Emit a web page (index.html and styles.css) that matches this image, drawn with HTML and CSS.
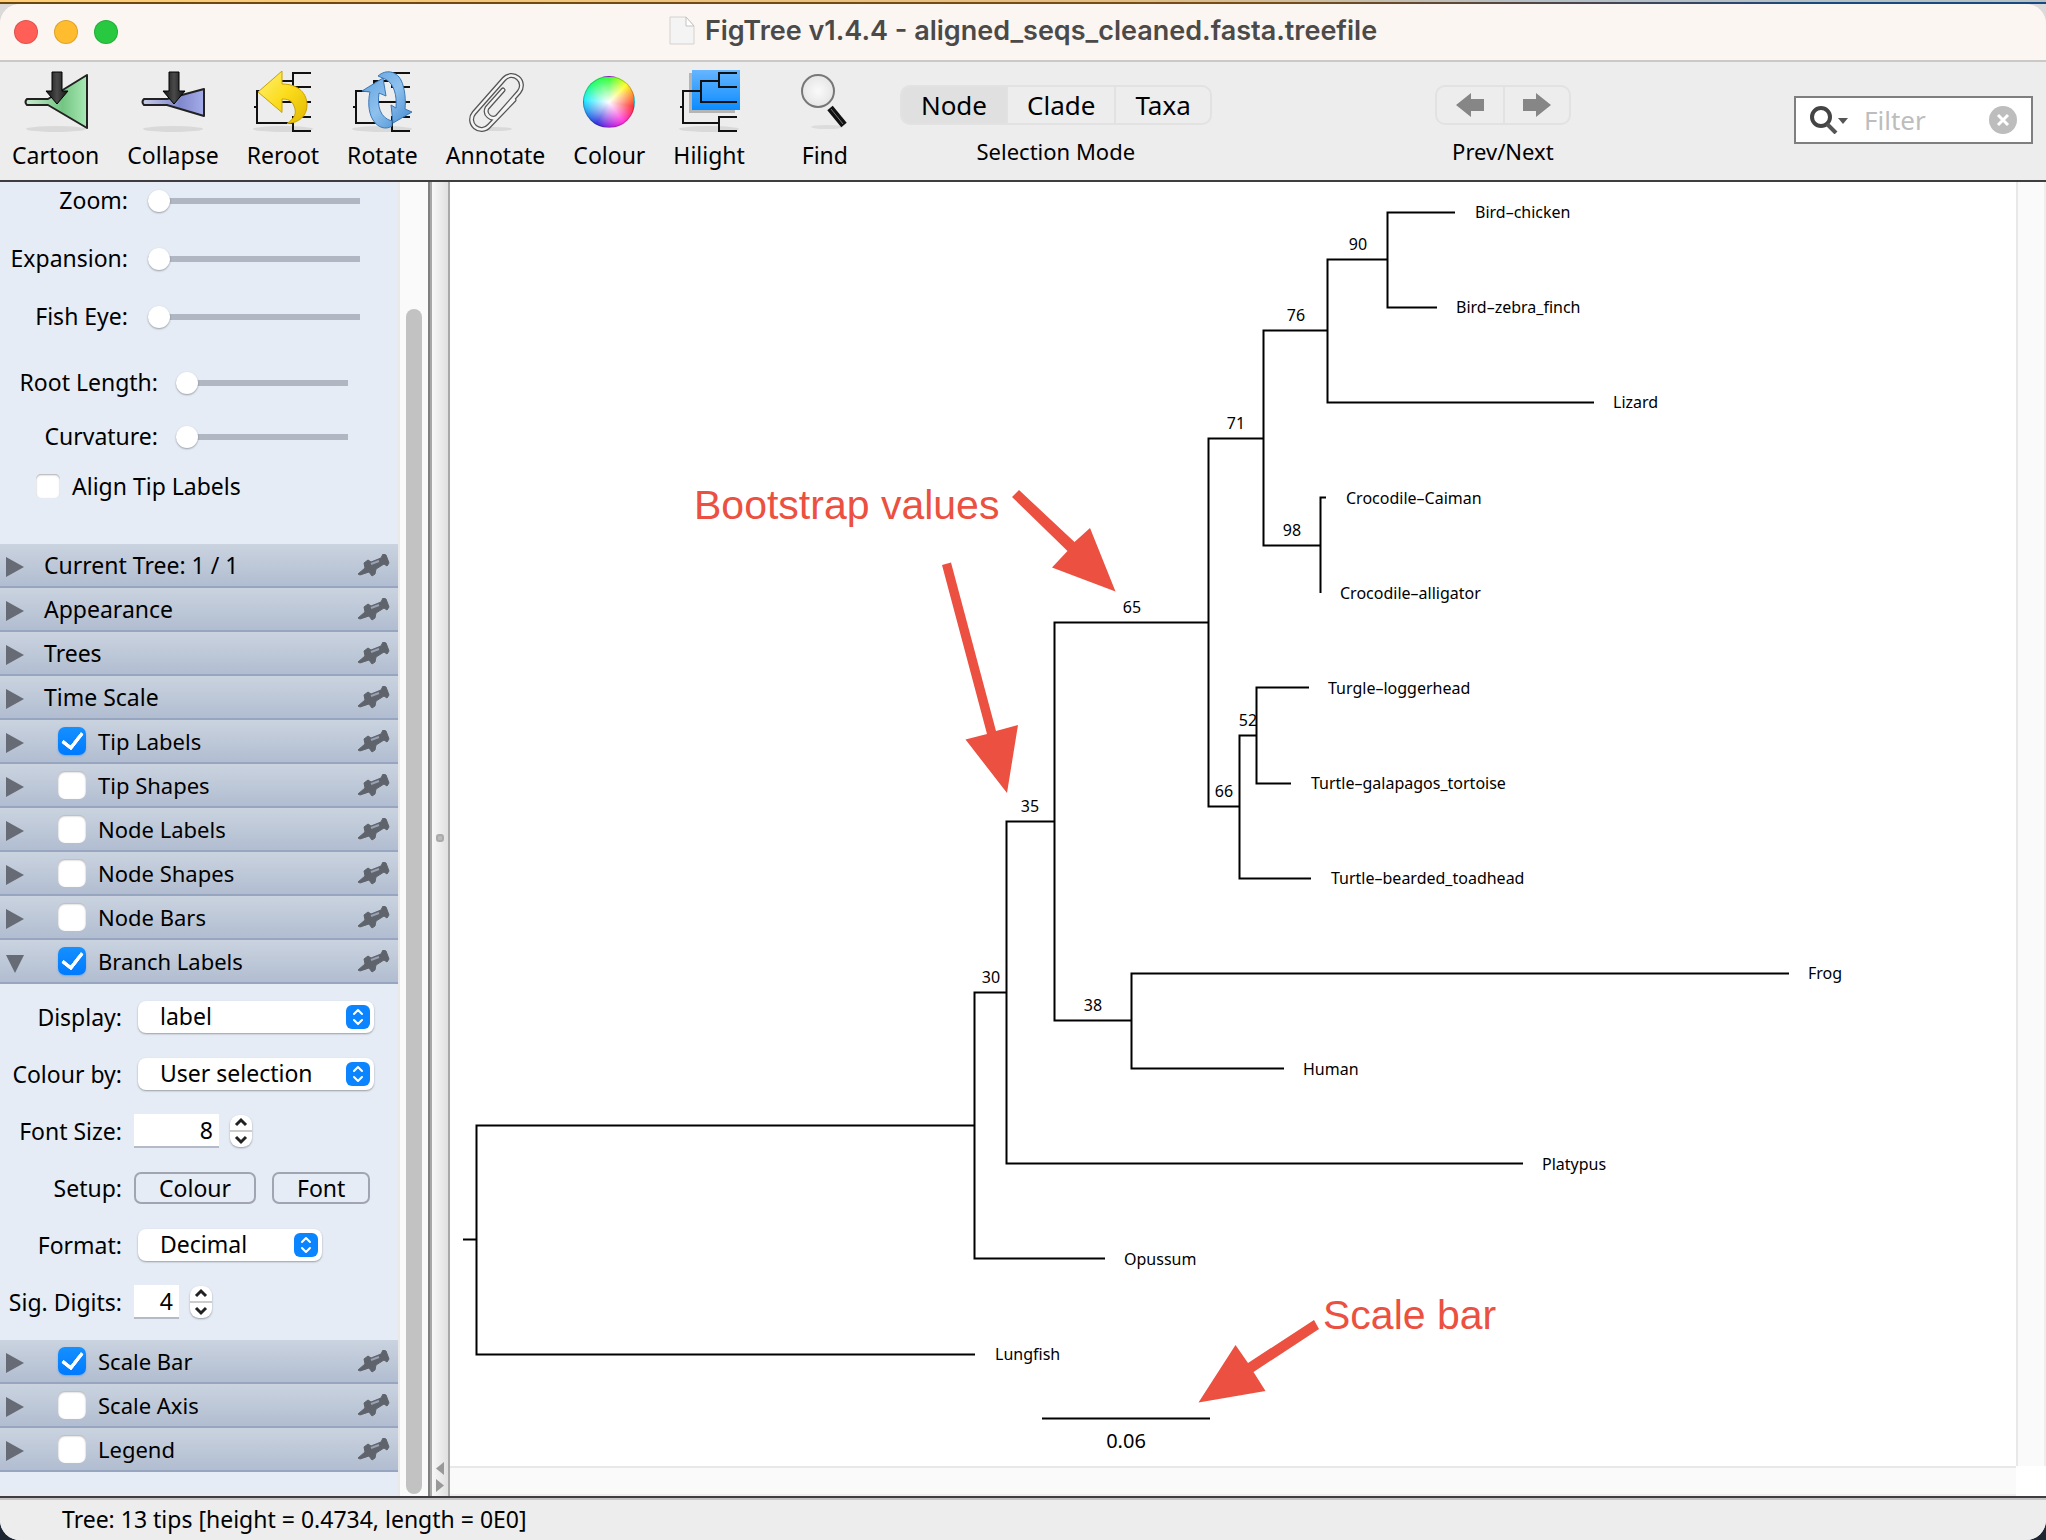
FILE: index.html
```html
<!DOCTYPE html>
<html lang="en">
<head>
<meta charset="utf-8">
<title>FigTree v1.4.4 - aligned_seqs_cleaned.fasta.treefile</title>
<link rel="stylesheet" href="styles.css">
</head>
<body>
<svg class="defs" aria-hidden="true">
  <defs>
    <linearGradient id="green" x1="0" x2="1"><stop offset="0" stop-color="#c9ecd0"/><stop offset=".6" stop-color="#73c583"/><stop offset="1" stop-color="#a9e8b4"/></linearGradient>
    <linearGradient id="violet" x1="0" x2="1"><stop offset="0" stop-color="#c9cdea"/><stop offset=".6" stop-color="#7f88cc"/><stop offset="1" stop-color="#a5acea"/></linearGradient>
    <linearGradient id="gold" x1="0" y1="0" x2="1" y2="1"><stop offset="0" stop-color="#fff27a"/><stop offset=".5" stop-color="#fbdc1c"/><stop offset="1" stop-color="#e2b800"/></linearGradient>
    <linearGradient id="azure" x1="0" y1="0" x2="1" y2="1"><stop offset="0" stop-color="#5d9fdc"/><stop offset=".5" stop-color="#8fc1ee"/><stop offset="1" stop-color="#3d86cc"/></linearGradient>
    <linearGradient id="sky" x1="0" y1="0" x2="0" y2="1"><stop offset="0" stop-color="#66b5ff"/><stop offset="1" stop-color="#0a8cff"/></linearGradient>
    <linearGradient id="ink" x1="0" x2="1"><stop offset="0" stop-color="#111"/><stop offset=".5" stop-color="#4a4a4a"/><stop offset="1" stop-color="#111"/></linearGradient>
    <radialGradient id="lens"><stop offset="0" stop-color="#fafafa"/><stop offset="1" stop-color="#e6e6e6"/></radialGradient>
    <g id="shade"><ellipse cx="32" cy="61" rx="30" ry="3" fill="#d9d9d9"/></g>
    <g id="down-arrow"><path d="M28 4h10v19h6L33 36 22 23h6z" fill="url(#ink)" stroke="#000"/></g>
    <g id="mini-tree" fill="none" stroke="#111" stroke-width="2"><path d="M3 39H6M42 55H6V23H24M42 13H24V34H60M60 5H42V19H60M60 49H42V63H60"/></g>
    <g id="pin"><path d="M0 20 7 14 6 9 10 6 13 8 23 4 25 0 28 1 31 9 29 12 26 10 18 15 17 20 14 22 11 18 2 21Z" fill="#5f636b" stroke="#5f636b" stroke-linejoin="round"/><path d="M13 10 21 7" stroke="#98a2b3" stroke-width="2"/></g>
    <g id="updown" fill="none" stroke="#fff" stroke-width="2" stroke-linecap="round" stroke-linejoin="round"><rect width="24" height="24" rx="6" fill="#0a84ff" stroke="none"/><path d="M8 9 12 5 16 9M8 15 12 19 16 15"/></g>
  </defs>
</svg>

<div class="window">
  <header class="titlebar">
    <div class="lights">
      <button class="light red" aria-label="Close"></button>
      <button class="light amber" aria-label="Minimise"></button>
      <button class="light green" aria-label="Zoom window"></button>
    </div>
    <h1 class="title">
      <svg class="doc" viewBox="0 0 26 30" aria-hidden="true"><path d="M1 1H17L25 10V28H1Z" fill="#f4f4f4" stroke="#d4d2d0"/><path d="M17 1V10H25Z" fill="#fff" stroke="#c4c2c0"/></svg>
      FigTree v1.4.4 - aligned_seqs_cleaned.fasta.treefile
    </h1>
  </header>

  <div class="toolbar">
    <div class="tools">
      <button class="tool"><svg class="icon" viewBox="0 0 64 64"><use href="#shade"/><path d="M24 31H3Q0 34 3 37H24L63 60V7Z" fill="url(#green)" stroke="#222" stroke-width="2" stroke-linejoin="round"/><use href="#down-arrow"/></svg>Cartoon</button>
      <button class="tool"><svg class="icon" viewBox="0 0 64 64"><use href="#shade"/><path d="M26 31H3Q0 34 3 37H26L63 48V21Z" fill="url(#violet)" stroke="#222" stroke-width="2" stroke-linejoin="round"/><use href="#down-arrow"/></svg>Collapse</button>
      <button class="tool"><svg class="icon" viewBox="0 0 64 64"><use href="#shade"/><use href="#mini-tree"/><path d="M7 24 31 3V16C48 16 56 26 56 37 56 48 48 55 36 55.500C44 50 46 45 43 38 41 32 36 31 31 31V44.500Z" fill="url(#gold)" stroke="#c9a200"/></svg>Reroot</button>
      <button class="tool"><svg class="icon" viewBox="0 0 64 64"><use href="#shade"/><use href="#mini-tree"/><path d="M12 23 33 10 36 28 29 25C27 38 30 50 42 53V58C36 62 28 60 23 52 18 44 18 32 20 24ZM62 44 43 55 41 37 46 40C47 27 44 17 37 12L28 8C36 1 46 3 51 12 55 20 56 33 55 41Z" fill="url(#azure)" stroke="#3a78b8"/></svg>Rotate</button>
      <button class="tool"><svg class="icon" viewBox="0 0 64 64" fill="none" stroke-linecap="round"><ellipse cx="30" cy="61" rx="18" ry="2" fill="#d9d9d9"/><path d="M39 22 23 40A7 7 0 0 0 33 49L55 24A9.500 9.500 0 0 0 40 11L10 45A9.500 9.500 0 0 0 25 58L50 32" stroke="#555" stroke-width="5"/><path d="M39 22 23 40A7 7 0 0 0 33 49L55 24A9.500 9.500 0 0 0 40 11L10 45A9.500 9.500 0 0 0 25 58L50 32" stroke="#f4f4f4" stroke-width="2.500"/></svg>Annotate</button>
      <button class="tool"><span class="icon"><span class="wheel"></span></span>Colour</button>
      <button class="tool"><svg class="icon" viewBox="0 0 64 64"><use href="#shade"/><path d="M12 5H58V45H12Z" fill="#b5b5b5"/><path d="M15 2H63V42H15Z" fill="url(#sky)"/><use href="#mini-tree"/></svg>Hilight</button>
      <button class="tool find"><svg class="icon" viewBox="0 0 64 64"><ellipse cx="34" cy="59" rx="16" ry="2" fill="#dcdcdc"/><circle cx="25" cy="23" r="16" fill="url(#lens)" stroke="#777" stroke-width="2"/><path d="M37 40 51 57" stroke="#111" stroke-width="7"/><path d="M38 41 50 56" stroke="#777" stroke-width="1"/></svg>Find</button>
    </div>
    <div class="group">
      <div class="segments" role="group" aria-labelledby="mode">
        <button class="segment on" aria-pressed="true">Node</button><button class="segment" aria-pressed="false">Clade</button><button class="segment" aria-pressed="false">Taxa</button>
      </div>
      <span id="mode">Selection Mode</span>
    </div>
    <div class="group nav">
      <div class="segments" role="group" aria-labelledby="nav">
        <button class="segment step" aria-label="Previous"><svg viewBox="0 0 28 24"><path d="M0 12 15 0V6H28V18H15V24Z" fill="#868686"/></svg></button><button class="segment step" aria-label="Next"><svg viewBox="0 0 28 24"><path d="M28 12 13 0V6H0V18H13V24Z" fill="#868686"/></svg></button>
      </div>
      <span id="nav">Prev/Next</span>
    </div>
    <div class="search">
      <svg class="lookup" viewBox="0 0 40 28" fill="none" aria-hidden="true"><circle cx="11" cy="11" r="9" stroke="#444" stroke-width="4"/><path d="M17 18 26 27" stroke="#555" stroke-width="4"/><path d="M28 12H38L33 18Z" fill="#555"/></svg>
      <input class="filter" type="text" placeholder="Filter" aria-label="Filter">
      <button class="clear" aria-label="Clear filter"><svg viewBox="0 0 28 28"><circle cx="14" cy="14" r="14" fill="#bdbdbd"/><path d="M9 9 19 19M19 9 9 19" stroke="#fff" stroke-width="3"/></svg></button>
    </div>
  </div>

  <div class="content">
    <aside class="sidebar">
      <div class="layout-panel">
        <div class="sliders">
          <div class="slide"><label for="zoom">Zoom:</label><input id="zoom" type="range" value="0"></div>
          <div class="slide"><label for="expansion">Expansion:</label><input id="expansion" type="range" value="0"></div>
          <div class="slide"><label for="fisheye">Fish Eye:</label><input id="fisheye" type="range" value="0"></div>
        </div>
        <div class="sliders inner">
          <div class="slide"><label for="rootlen">Root Length:</label><input id="rootlen" type="range" value="0"></div>
          <div class="slide"><label for="curve">Curvature:</label><input id="curve" type="range" value="0"></div>
        </div>
        <label class="align"><input class="tick small" type="checkbox"><span>Align Tip Labels</span></label>
      </div>

      <div class="section"><button class="toggle" aria-label="Expand Current Tree"></button><span class="heading">Current Tree: 1 / 1</span><svg class="pin" viewBox="0 0 32 23"><use href="#pin"/></svg></div>
      <div class="section"><button class="toggle" aria-label="Expand Appearance"></button><span class="heading">Appearance</span><svg class="pin" viewBox="0 0 32 23"><use href="#pin"/></svg></div>
      <div class="section"><button class="toggle" aria-label="Expand Trees"></button><span class="heading">Trees</span><svg class="pin" viewBox="0 0 32 23"><use href="#pin"/></svg></div>
      <div class="section"><button class="toggle" aria-label="Expand Time Scale"></button><span class="heading">Time Scale</span><svg class="pin" viewBox="0 0 32 23"><use href="#pin"/></svg></div>
      <div class="section"><button class="toggle" aria-label="Expand Tip Labels"></button><label class="check"><input class="tick" type="checkbox" checked>Tip Labels</label><svg class="pin" viewBox="0 0 32 23"><use href="#pin"/></svg></div>
      <div class="section"><button class="toggle" aria-label="Expand Tip Shapes"></button><label class="check"><input class="tick" type="checkbox">Tip Shapes</label><svg class="pin" viewBox="0 0 32 23"><use href="#pin"/></svg></div>
      <div class="section"><button class="toggle" aria-label="Expand Node Labels"></button><label class="check"><input class="tick" type="checkbox">Node Labels</label><svg class="pin" viewBox="0 0 32 23"><use href="#pin"/></svg></div>
      <div class="section"><button class="toggle" aria-label="Expand Node Shapes"></button><label class="check"><input class="tick" type="checkbox">Node Shapes</label><svg class="pin" viewBox="0 0 32 23"><use href="#pin"/></svg></div>
      <div class="section"><button class="toggle" aria-label="Expand Node Bars"></button><label class="check"><input class="tick" type="checkbox">Node Bars</label><svg class="pin" viewBox="0 0 32 23"><use href="#pin"/></svg></div>
      <div class="section"><button class="toggle open" aria-label="Collapse Branch Labels"></button><label class="check"><input class="tick" type="checkbox" checked>Branch Labels</label><svg class="pin" viewBox="0 0 32 23"><use href="#pin"/></svg></div>

      <div class="options">
        <label for="display">Display:</label>
        <div class="picker"><select id="display"><option>label</option></select><svg viewBox="0 0 24 24"><use href="#updown"/></svg></div>
        <label for="colourby">Colour by:</label>
        <div class="picker"><select id="colourby"><option>User selection</option></select><svg viewBox="0 0 24 24"><use href="#updown"/></svg></div>
        <label for="fontsize">Font Size:</label>
        <div class="field"><input class="number" id="fontsize" type="text" value="8"><button class="stepper" aria-label="Change font size"><svg viewBox="0 0 22 32"><path d="M0 16H22" stroke="#ccc" stroke-width="2"/><path d="M6 10 11 5 16 10M6 22 11 27 16 22" fill="none" stroke="#222" stroke-width="3"/></svg></button></div>
        <span class="caption">Setup:</span>
        <div class="field"><button class="push">Colour</button><button class="push">Font</button></div>
        <label for="format">Format:</label>
        <div class="picker short"><select id="format"><option>Decimal</option></select><svg viewBox="0 0 24 24"><use href="#updown"/></svg></div>
        <label for="digits">Sig. Digits:</label>
        <div class="field"><input class="number narrow" id="digits" type="text" value="4"><button class="stepper" aria-label="Change significant digits"><svg viewBox="0 0 22 32"><path d="M0 16H22" stroke="#ccc" stroke-width="2"/><path d="M6 10 11 5 16 10M6 22 11 27 16 22" fill="none" stroke="#222" stroke-width="3"/></svg></button></div>
      </div>

      <div class="section"><button class="toggle" aria-label="Expand Scale Bar"></button><label class="check"><input class="tick" type="checkbox" checked>Scale Bar</label><svg class="pin" viewBox="0 0 32 23"><use href="#pin"/></svg></div>
      <div class="section"><button class="toggle" aria-label="Expand Scale Axis"></button><label class="check"><input class="tick" type="checkbox">Scale Axis</label><svg class="pin" viewBox="0 0 32 23"><use href="#pin"/></svg></div>
      <div class="section"><button class="toggle" aria-label="Expand Legend"></button><label class="check"><input class="tick" type="checkbox">Legend</label><svg class="pin" viewBox="0 0 32 23"><use href="#pin"/></svg></div>
    </aside>

    <div class="scroll"><div class="thumb"></div></div>

    <div class="divider">
      <span class="grip"></span>
      <svg class="arrows" viewBox="0 0 8 30"><path d="M8 0V13L0 6.500ZM0 17V30L8 23.500Z" fill="#999"/></svg>
    </div>

    <main class="viewer">
      <svg class="tree" viewBox="450 182 1566 1284" role="img" aria-label="Phylogenetic tree">
        <g class="branches">
          <path d="M463 1239.500H476.500M975 1125.500H476.500V1354.500H975"/>
          <path d="M1006.500 992.500H974.500V1258.500H1105"/>
          <path d="M1054.500 821.500H1006.500V1163.500H1523"/>
          <path d="M1208.500 622.500H1054.500V1020.500H1131.500"/>
          <path d="M1789 973.500H1131.500V1068.500H1284"/>
          <path d="M1263.500 438.500H1208.500V806.500H1239.500"/>
          <path d="M1327.500 330.500H1263.500V545.500H1320.500"/>
          <path d="M1387.500 259.500H1327.500V402.500H1594"/>
          <path d="M1455 212.500H1387.500V307.500H1437"/>
          <path d="M1326 497.500H1320.500V593"/>
          <path d="M1256.500 735.500H1239.500V878.500H1311"/>
          <path d="M1309 687.500H1256.500V783.500H1291"/>
          <path d="M1042 1418.500H1210"/>
        </g>
        <g class="tips">
          <text x="1475" y="218">Bird–chicken</text>
          <text x="1456" y="313">Bird–zebra_finch</text>
          <text x="1613" y="408">Lizard</text>
          <text x="1346" y="504">Crocodile–Caiman</text>
          <text x="1340" y="599">Crocodile–alligator</text>
          <text x="1328" y="694">Turgle–loggerhead</text>
          <text x="1311" y="789">Turtle–galapagos_tortoise</text>
          <text x="1331" y="884">Turtle–bearded_toadhead</text>
          <text x="1808" y="979">Frog</text>
          <text x="1303" y="1075">Human</text>
          <text x="1542" y="1170">Platypus</text>
          <text x="1124" y="1265">Opussum</text>
          <text x="995" y="1360">Lungfish</text>
        </g>
        <g class="values">
          <text x="1358" y="250">90</text>
          <text x="1296" y="321">76</text>
          <text x="1236" y="429">71</text>
          <text x="1292" y="536">98</text>
          <text x="1132" y="613">65</text>
          <text x="1248" y="726">52</text>
          <text x="1224" y="797">66</text>
          <text x="1030" y="812">35</text>
          <text x="991" y="983">30</text>
          <text x="1093" y="1011">38</text>
          <text class="scale" x="1126" y="1448">0.06</text>
        </g>
        <g class="notes">
          <text x="694" y="519">Bootstrap values</text>
          <text x="1323" y="1329">Scale bar</text>
          <path d="M1019 490 1074.500 542 1090 528 1115.500 591.500 1052 567.500 1067.500 551 1012 497Z"/>
          <path d="M951 562.500 996 731 1018 725 1007 793 965.500 739.500 987 734 942 565Z"/>
          <path d="M1314 1320 1248 1363 1235.500 1345 1198.500 1402.500 1265.500 1391 1253.500 1372 1319 1329Z"/>
        </g>
      </svg>
      <div class="vscroll"></div>
      <div class="hscroll"></div>
    </main>
  </div>

  <footer class="status">Tree: 13 tips [height = 0.4734, length = 0E0]</footer>
</div>
</body>
</html>
```
FILE: styles.css
```css
* { box-sizing: border-box; }

body {
  margin: 0;
  min-height: 100vh;
  display: flex;
  flex-direction: column;
  padding-top: 4px;
  font: 23px/30px "Noto Sans", sans-serif;
  color: #000;
  background:
    linear-gradient(90deg, #ffcf78, #e0bd85 55%, #b4bfc6 75%, #b9bfc2) 0 0 / 100% 2px no-repeat,
    linear-gradient(90deg, #6b4710, #7a4d16 62%, #4a4450 78%, #154b82 90%) 0 2px / 100% 2px no-repeat,
    linear-gradient(#dcdad8, #dcdad8) 0 4px / 100% 40px no-repeat,
    #1e2633;
}

button, input, select { font: inherit; color: inherit; margin: 0; padding: 0; border: 0; background: none; }
.defs { position: absolute; width: 0; height: 0; }

.window {
  flex: 1;
  display: flex;
  flex-direction: column;
  border-radius: 20px;
  overflow: hidden;
  background: #ededed;
}

.titlebar {
  display: grid;
  grid-template-columns: 1fr auto 1fr;
  align-items: center;
  height: 58px;
  padding: 0 14px;
  background: #fcf6f2;
  border-bottom: 2px solid #cbc9c8;
}
.lights { display: flex; gap: 16px; }
.light { width: 24px; height: 24px; border-radius: 50%; border: 1px solid #0002; }
.red { background: #ff5f57; }
.amber { background: #febc2e; }
.light.green { background: #28c840; }
.title {
  display: flex;
  align-items: center;
  gap: 10px;
  margin: 0;
  padding-bottom: 2px;
  font: 600 27px/30px Inter, sans-serif;
  color: #4c4a49;
}
.doc { width: 26px; height: 30px; }

.toolbar {
  display: flex;
  height: 120px;
  padding: 6px 13px 0 12px;
  border-bottom: 2px solid #3f3d3f;
}
.tools { display: flex; gap: 28px; margin-right: 23px; }
.tool { display: flex; flex-direction: column; align-items: center; gap: 8px; }
.tool.find { width: 104px; }
.icon { width: 64px; height: 64px; display: grid; place-items: center; }
.wheel {
  width: 52px;
  height: 52px;
  border-radius: 50%;
  margin-top: 4px;
  border: 1px solid #0003;
  background:
    radial-gradient(#fff, #fff0 70%),
    conic-gradient(#3f3, #ff2 45deg, #f93 70deg, #f33 100deg, #f3d 145deg, #a2d 175deg, #33d 210deg, #2ef 275deg, #2f7 315deg, #3f3);
}

.group { display: flex; flex-direction: column; align-items: center; gap: 11px; padding-top: 17px; font-size: 22px; }
.group.nav { margin: 0 auto; }
.segments { display: flex; height: 40px; border: 2px solid #e2e2e2; border-radius: 10px; }
.segment { display: grid; place-items: center; font-size: 26px; padding: 0 19px; }
.segment.on { background: #e0e0e0; border-radius: 8px 0 0 8px; }
.segment + .segment { border-left: 2px solid #e2e2e2; }
.segment.step { width: 66px; padding: 0; }
.step svg { width: 28px; height: 24px; }

.search {
  display: flex;
  align-items: center;
  width: 239px;
  height: 48px;
  margin-top: 28px;
  padding: 0 14px;
  background: #fff;
  border: 2px solid #7f7f7f;
}
.lookup { width: 40px; height: 28px; }
.filter { flex: 1; min-width: 0; padding-left: 14px; font-size: 26px; outline: 0; }
.filter::placeholder { color: #bdbdbd; opacity: 1; }
.clear, .clear svg { display: block; width: 28px; height: 28px; }

.content { flex: 1; display: grid; grid-template-columns: 398px 30px 22px 1fr; }

.sidebar { background: #e5ecf6; white-space: nowrap; }
.layout-panel { padding-bottom: 39px; }
.sliders { display: grid; gap: 20px; }
.sliders.inner { gap: 16px; margin-top: 28px; }
.slide { display: flex; align-items: center; height: 38px; }
.slide label { width: 128px; padding-bottom: 2px; text-align: right; }
.slide input { width: 212px; margin-left: 20px; }
.inner label { width: 158px; }
.inner input { width: 172px; margin-left: 18px; }
input[type="range"] {
  appearance: none;
  height: 22px;
  background: linear-gradient(#b0b7c3, #b0b7c3) center / 100% 6px no-repeat;
}
input[type="range"]::-webkit-slider-thumb {
  appearance: none;
  width: 22px;
  height: 22px;
  border-radius: 50%;
  background: #fff;
  box-shadow: 0 1px 2px #0005;
}
.align { display: flex; align-items: center; gap: 12px; height: 38px; margin: 11px 0 0 36px; }

.tick {
  appearance: none;
  display: grid;
  place-items: center;
  width: 28px;
  height: 28px;
  border-radius: 7px;
  background: #fff;
  box-shadow: inset 0 1px 2px #0005;
}
.tick.small { width: 24px; height: 24px; border-radius: 5px; }
.tick:checked { background: linear-gradient(#1590ff, #007aff); box-shadow: 0 1px 2px #0070f055; }
.tick:checked::after {
  content: "";
  width: 9px;
  height: 17px;
  margin-bottom: 5px;
  border: solid #fff;
  border-width: 0 4px 4px 0;
  border-radius: 2px;
  transform: rotate(38deg);
}

.section {
  display: flex;
  align-items: center;
  height: 44px;
  padding-right: 8px;
  background: linear-gradient(#cad3df, #b1bdd1);
  border-bottom: 2px solid #98a5bf;
}
.toggle { width: 44px; height: 42px; padding-left: 6px; }
.toggle::before {
  content: "";
  display: block;
  width: 18px;
  height: 20px;
  margin-top: 4px;
  background: #666b75;
  clip-path: polygon(0 0, 100% 50%, 0 100%);
}
.toggle.open::before { clip-path: polygon(0 10%, 100% 10%, 50% 100%); }
.check { display: flex; align-items: center; gap: 12px; padding-left: 14px; font-size: 22px; }
.pin { width: 32px; height: 23px; margin-left: auto; }

.options {
  display: grid;
  grid-template-columns: 122px 1fr;
  grid-auto-rows: 32px;
  align-items: center;
  gap: 25px 12px;
  padding: 17px 0 22px;
}
.options > label, .caption { text-align: right; }
.picker { display: grid; align-items: center; width: 236px; margin-left: 4px; }
.picker.short { width: 184px; }
.picker select, .picker svg { grid-area: 1 / 1; }
.picker select {
  appearance: none;
  height: 32px;
  padding: 0 36px 3px 22px;
  background: #fff;
  border-radius: 8px;
  box-shadow: 0 1px 2px #0005;
}
.picker svg { width: 24px; height: 24px; justify-self: end; margin-right: 4px; pointer-events: none; }
.field { display: flex; align-items: center; }
.number { width: 85px; height: 34px; padding-right: 6px; text-align: right; background: #fff; border-bottom: 2px solid #b5bbc6; }
.number.narrow { width: 45px; }
.stepper { width: 22px; height: 32px; margin-left: 11px; border-radius: 9px; background: #fff; box-shadow: 0 1px 2px #0005; }
.stepper svg { display: block; width: 22px; height: 32px; }
.push { height: 32px; padding: 0 23px; line-height: 26px; border: 2px solid #a0a5b1; border-radius: 7px; }
.push + .push { margin-left: 16px; }

.scroll { display: flex; flex-direction: column; padding: 127px 6px 2px; background: #fafafa; border-left: 2px solid #e8e8e8; }
.thumb { flex: 1; width: 16px; border-radius: 8px; background: #c2c2c2; }

.divider {
  display: flex;
  flex-direction: column;
  align-items: center;
  justify-content: space-between;
  padding: 652px 0 4px 2px;
  border-left: 2px solid #808080;
  border-right: 2px solid #a8a8a8;
  background: linear-gradient(90deg, #a8a8a8 2px, #f8f8f8 2px, #e0e0e0);
}
.grip { width: 8px; height: 8px; border: 2px solid #aaa; border-radius: 3px; background: #bbb; }
.arrows { width: 8px; height: 30px; }

.viewer { display: grid; grid-template-columns: 1fr 30px; grid-template-rows: 1fr 30px; background: #fff; }
.tree { display: block; width: 100%; height: auto; }
.vscroll { background: #fafafa; border-left: 2px solid #e8e8e8; border-right: 2px solid #efefef; }
.hscroll { background: #fafafa; border-top: 2px solid #e8e8e8; border-bottom: 2px solid #efefef; }
.branches { fill: none; stroke: #000; stroke-width: 2; }
.tips, .values { font-size: 16px; }
.values { text-anchor: middle; }
.scale { font-size: 20px; }
.notes { fill: #eb5040; font: 41px "Liberation Sans", sans-serif; }

.status {
  height: 44px;
  padding: 6px 62px 0;
  border-top: 2px solid #3f3d3f;
  background: linear-gradient(#c4c2c4 2px, #ededed 2px);
}
```
